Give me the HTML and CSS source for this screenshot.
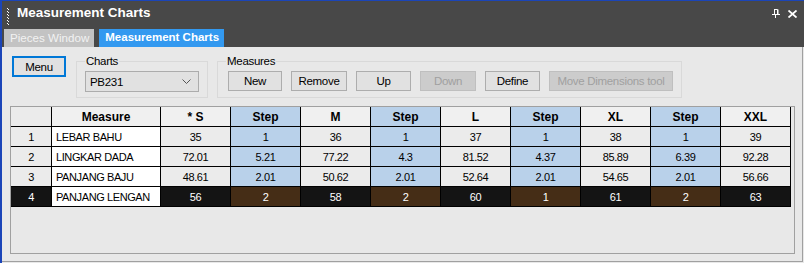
FILE: index.html
```html
<!DOCTYPE html>
<html lang="en">
<head>
    <meta charset="UTF-8">
    <title>Measurement Charts</title>
    <link rel="stylesheet" href="styles.css">
</head>
<body>
    <div class="window">
        <div class="titlebar">
            <span class="grip"></span>
            <span class="title">Measurement Charts</span>
            <span class="caption-btns">
                <svg class="pin" width="8" height="9" viewBox="0 0 8 9">
                    <path d="M2.5 0.5h3v5M2.5 0v5M6 0.5v5M0 5.5h8M3.5 5.5v3.5" stroke="#fff" stroke-width="1" fill="none"/>
                </svg>
                <svg class="close" width="9" height="8" viewBox="0 0 9 8">
                    <path d="M0.5 0.5l8 7M8.5 0.5l-8 7" stroke="#fff" stroke-width="1.8" fill="none"/>
                </svg>
            </span>
        </div>
        <div class="tabs">
            <span class="tab">Pieces Window</span>
            <span class="tab active">Measurement Charts</span>
        </div>
        <div class="content">
            <div class="toolbar">
                <button class="btn menu">Menu</button>
                <fieldset class="group charts">
                    <legend>Charts</legend>
                    <div class="combo">
                        <span>PB231</span>
                        <svg width="9" height="5" viewBox="0 0 9 5"><path d="M0.5 0.5l4 4 4-4" stroke="#555" fill="none"/></svg>
                    </div>
                </fieldset>
                <fieldset class="group measures">
                    <legend>Measures</legend>
                    <div class="btn-row">
                        <button class="btn w54">New</button>
                        <button class="btn w56">Remove</button>
                        <button class="btn w55">Up</button>
                        <button class="btn w56" disabled>Down</button>
                        <button class="btn w55">Define</button>
                        <button class="btn w124" disabled>Move Dimensions tool</button>
                    </div>
                </fieldset>
            </div>
            <div class="grid-frame">
                <div class="grid">
                    <div class="cell head corner"></div>
                    <div class="cell head">Measure</div>
                    <div class="cell head">* S</div>
                    <div class="cell head step">Step</div>
                    <div class="cell head">M</div>
                    <div class="cell head step">Step</div>
                    <div class="cell head">L</div>
                    <div class="cell head step">Step</div>
                    <div class="cell head">XL</div>
                    <div class="cell head step">Step</div>
                    <div class="cell head">XXL</div>

                    <div class="cell num">1</div>
                    <div class="cell name">LEBAR BAHU</div>
                    <div class="cell">35</div>
                    <div class="cell step">1</div>
                    <div class="cell">36</div>
                    <div class="cell step">1</div>
                    <div class="cell">37</div>
                    <div class="cell step">1</div>
                    <div class="cell">38</div>
                    <div class="cell step">1</div>
                    <div class="cell">39</div>

                    <div class="cell num">2</div>
                    <div class="cell name">LINGKAR DADA</div>
                    <div class="cell">72.01</div>
                    <div class="cell step">5.21</div>
                    <div class="cell">77.22</div>
                    <div class="cell step">4.3</div>
                    <div class="cell">81.52</div>
                    <div class="cell step">4.37</div>
                    <div class="cell">85.89</div>
                    <div class="cell step">6.39</div>
                    <div class="cell">92.28</div>

                    <div class="cell num">3</div>
                    <div class="cell name">PANJANG BAJU</div>
                    <div class="cell">48.61</div>
                    <div class="cell step">2.01</div>
                    <div class="cell">50.62</div>
                    <div class="cell step">2.01</div>
                    <div class="cell">52.64</div>
                    <div class="cell step">2.01</div>
                    <div class="cell">54.65</div>
                    <div class="cell step">2.01</div>
                    <div class="cell">56.66</div>

                    <div class="cell num sel">4</div>
                    <div class="cell name">PANJANG LENGAN</div>
                    <div class="cell sel">56</div>
                    <div class="cell step sel">2</div>
                    <div class="cell sel">58</div>
                    <div class="cell step sel">2</div>
                    <div class="cell sel">60</div>
                    <div class="cell step sel">1</div>
                    <div class="cell sel">61</div>
                    <div class="cell step sel">2</div>
                    <div class="cell sel">63</div>
                </div>
            </div>
        </div>
    </div>
</body>
</html>
```

FILE: styles.css
```css
:root {
    --frame-blue: #1b45b8;
    --bar: #484848;
    --panel: #e8e8e8;
    --btn: #e1e1e1;
    --btn-border: #adadad;
    --step: #b9d1ea;
    --sel: #141414;
    --sel-step: #452d16;
}
html, body {
    margin: 0; padding: 0;
}
body {
    font-family: "Liberation Sans", Arial, sans-serif;
    background: var(--panel);
}
.window {
    width: 804px;
    height: 263px;
    box-sizing: border-box;
    border-top: 1px solid var(--frame-blue);
    border-left: 2px solid var(--frame-blue);
    background: var(--panel);
    display: flex;
    flex-direction: column;
}

/* title bar */
.titlebar {
    height: 28px;
    background: var(--bar);
    display: flex;
    align-items: flex-start;
    flex-shrink: 0;
}
.grip {
    width: 2px;
    height: 18px;
    margin: 7px 0 0 5px;
    background:
        repeating-linear-gradient(to bottom, #fff 0 1px, transparent 1px 3px) left top / 1px 100% no-repeat,
        repeating-linear-gradient(to bottom, transparent 0 1px, #fff 1px 2px, transparent 2px 3px) right top / 1px 100% no-repeat;
}
.title {
    margin: 4px 0 0 8px;
    color: #fff;
    font-weight: bold;
    font-size: 13.5px;
    line-height: 16px;
}
.caption-btns {
    margin-left: auto;
    margin-top: 8px;
    margin-right: 7px;
    display: flex;
    gap: 8px;
}
.caption-btns .close {
    margin-top: 1px;
}

/* tabs */
.tabs {
    height: 18px;
    background: var(--bar);
    display: flex;
    gap: 5px;
    padding-left: 2px;
    flex-shrink: 0;
}
.tab {
    background: #c3c3c3;
    color: #f2f2f2;
    font-size: 11.6px;
    line-height: 17px;
    padding: 0 5px 0 6px;
}
.tab.active {
    background: #3399f0;
    color: #fff;
    font-weight: bold;
    font-size: 11.5px;
}

/* body */
.content {
    flex: 1;
    border-right: 1px solid #a0a0a0;
    border-bottom: 1px solid #a0a0a0;
    margin: 0 1px 1px 0;
}
.toolbar {
    display: flex;
    align-items: stretch;
    padding: 7px 0 0 10px;
}
.btn {
    font-family: "Liberation Sans", Arial, sans-serif;
    font-size: 11.5px;
    letter-spacing: -0.3px;
    color: #000;
    background: var(--btn);
    border: 1px solid var(--btn-border);
    height: 20px;
    padding: 0;
    margin: 0;
    box-sizing: border-box;
}
.btn:disabled {
    background: #cccccc;
    border-color: #bfbfbf;
    color: #a0a0a0;
}
.menu {
    align-self: flex-start;
    margin-top: 2px;
    width: 54px;
    height: 21px;
    border: 2px solid #0078d7;
}
.w54 { width: 54px; }
.w55 { width: 55px; }
.w56 { width: 56px; }
.w124 { width: 124px; }

.group {
    margin: 0;
    min-width: 0;
    box-sizing: border-box;
    border: 1px solid #d9d9d9;
    padding: 3px 8px 5px 8px;
}
.group legend {
    font-size: 11.5px;
    letter-spacing: -0.3px;
    line-height: 14px;
    padding: 0 1px;
}
.charts {
    width: 132px;
    margin-left: 10px;
}
.measures {
    width: 465px;
    margin-left: 9px;
    padding-left: 10px;
}
.measures legend {
    margin-left: -2px;
}
.combo {
    height: 21px;
    box-sizing: border-box;
    border: 1px solid #acacac;
    background: var(--btn);
    display: flex;
    align-items: center;
    justify-content: space-between;
    padding: 0 7px 0 4px;
    font-size: 11.5px;
    letter-spacing: -0.3px;
}
.btn-row {
    display: flex;
    gap: 9px;
}

/* grid */
.grid-frame {
    width: 785px;
    height: 148px;
    box-sizing: border-box;
    margin: 8px 0 0 8px;
    border: 1px solid #a0a0a0;
}
.grid {
    display: grid;
    grid-template-columns: 41px 109px repeat(9, 70px);
    grid-auto-rows: 20px;
}
.cell {
    box-sizing: border-box;
    border-right: 1px solid #000;
    border-bottom: 1px solid #000;
    background: #ebebeb;
    display: flex;
    align-items: center;
    justify-content: center;
    font-size: 11px;
    letter-spacing: -0.4px;
    white-space: nowrap;
}
.cell.head {
    background: #f0f0f0;
    font-weight: bold;
    font-size: 12px;
    letter-spacing: 0;
}
.cell.corner {
    background: #ebebeb;
}
.cell.step {
    background: var(--step);
}
.cell.name {
    background: #fff;
    justify-content: flex-start;
    padding-left: 4px;
}
.cell.sel {
    background: var(--sel);
    color: #fff;
}
.cell.step.sel {
    background: var(--sel-step);
}
```
